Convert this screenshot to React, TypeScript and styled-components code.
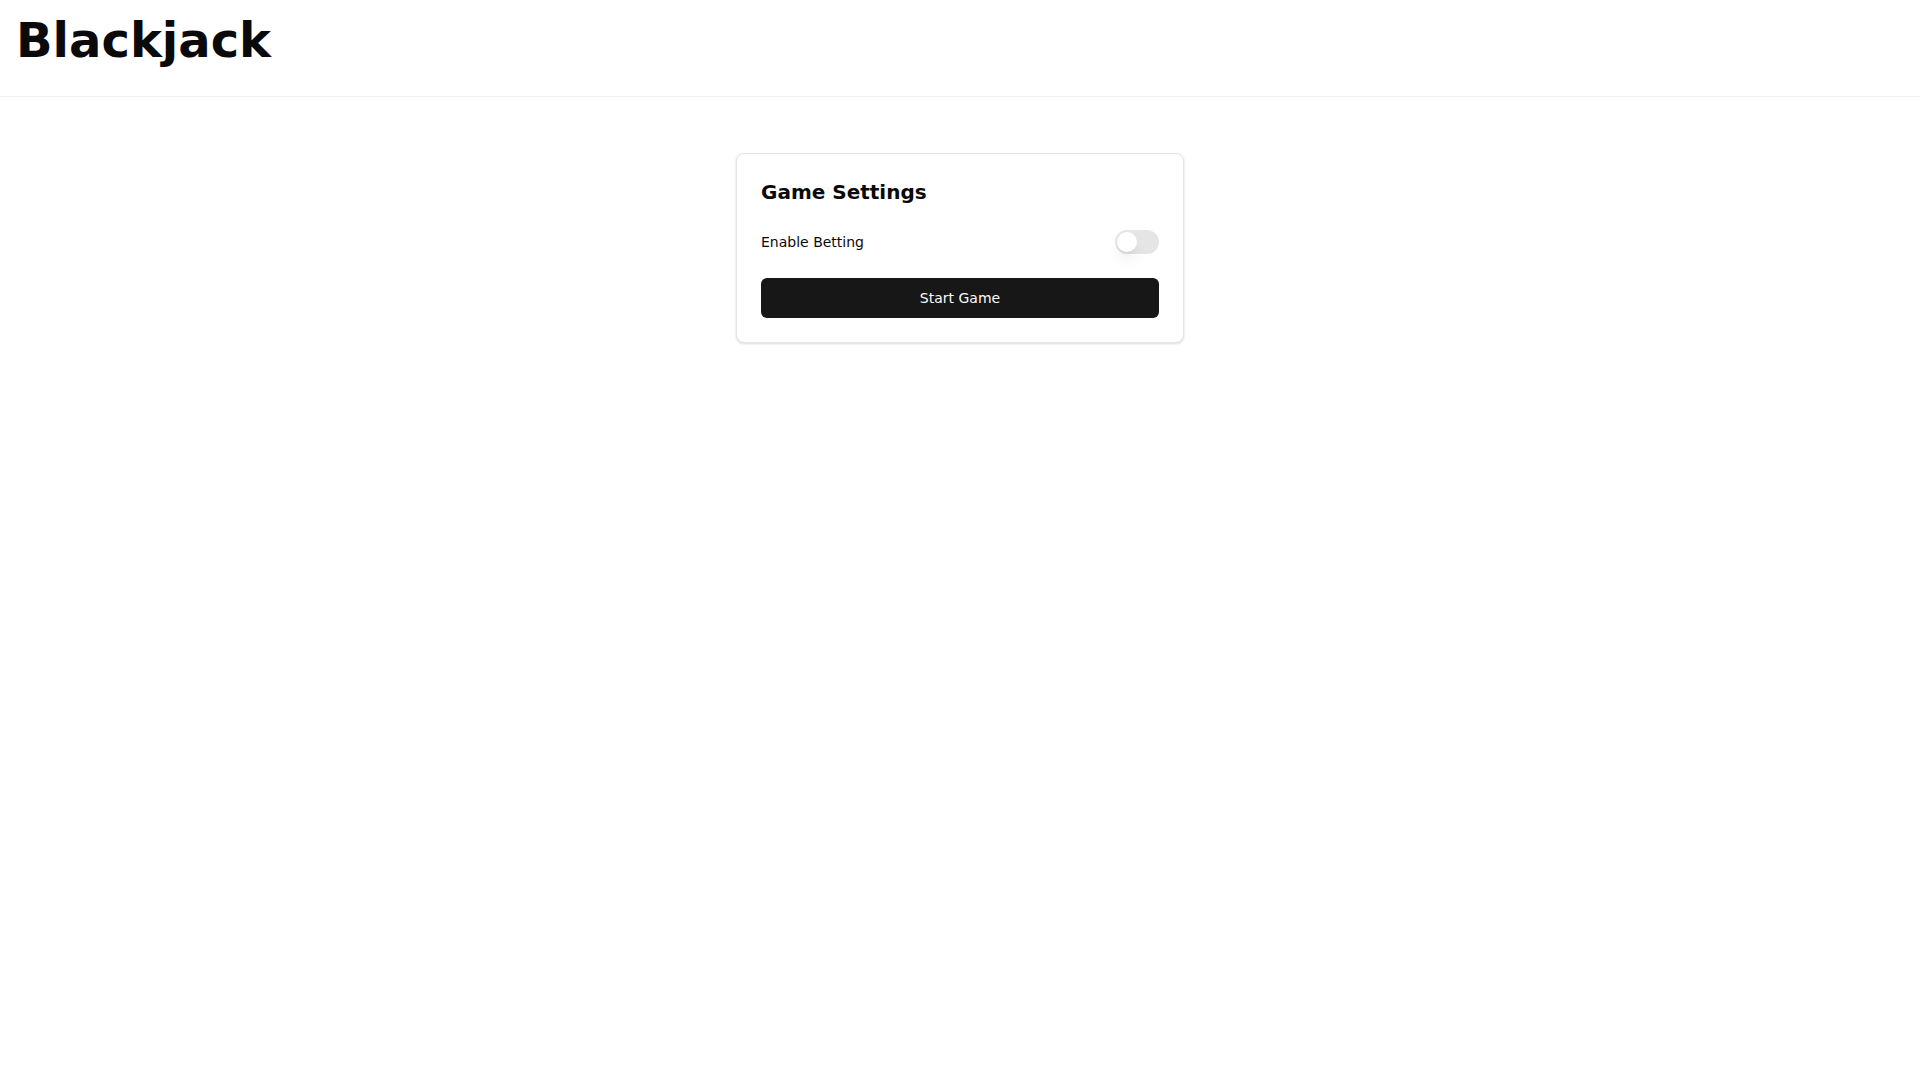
import { useState } from 'react'
import styled, { createGlobalStyle, ThemeProvider } from 'styled-components'

const theme = {
  background: '#ffffff',
  foreground: '#0a0a0a',
  primary: '#171717',
  primaryForeground: '#fafafa',
  border: '#e5e5e5',
  divider: '#f1f1f1',
}

const GlobalStyle = createGlobalStyle`
  *, *::before, *::after {
    box-sizing: border-box;
  }
  body {
    margin: 0;
    background: ${theme.background};
    color: ${theme.foreground};
    font-family: 'DejaVu Sans', sans-serif;
    font-size: 16px;
    line-height: 24px;
  }
`

const Header = styled.header`
  padding: 16px 16px 32px;
  border-bottom: 1px solid ${({ theme }) => theme.divider};
`

const PageTitle = styled.h1`
  margin: 0;
  font-size: 48px;
  font-weight: 700;
  line-height: 48px;
`

const Main = styled.main`
  display: flex;
  justify-content: center;
  padding: 56px 16px;
`

const Card = styled.form`
  display: flex;
  flex-direction: column;
  gap: 24px;
  width: 100%;
  max-width: 448px;
  padding: 24px;
  border: 1px solid ${({ theme }) => theme.border};
  border-radius: 8px;
  background: ${({ theme }) => theme.background};
  box-shadow: 0 1px 2px rgba(0, 0, 0, 0.05), 0 1px 3px rgba(0, 0, 0, 0.1);
`

const CardTitle = styled.h2`
  margin: 0;
  font-size: 20px;
  font-weight: 600;
  line-height: 28px;
`

const Row = styled.div`
  display: flex;
  align-items: center;
  justify-content: space-between;
`

const Label = styled.label`
  font-size: 14px;
  font-weight: 500;
  line-height: 14px;
`

const Switch = styled.input`
  display: flex;
  appearance: none;
  width: 44px;
  height: 24px;
  margin: 0;
  padding: 2px;
  border-radius: 12px;
  background: ${({ theme, checked }) => (checked ? theme.primary : theme.border)};
  cursor: pointer;
  transition: background 0.15s;

  &::before {
    content: '';
    width: 20px;
    height: 20px;
    border-radius: 50%;
    background: ${({ theme }) => theme.background};
    box-shadow: 0 10px 15px -3px rgba(0, 0, 0, 0.1), 0 4px 6px -4px rgba(0, 0, 0, 0.1);
    transform: translateX(${({ checked }) => (checked ? '20px' : 0)});
    transition: transform 0.15s;
  }
`

const Button = styled.button`
  height: 40px;
  padding: 8px 16px;
  border: 0;
  border-radius: 6px;
  background: ${({ theme }) => theme.primary};
  color: ${({ theme }) => theme.primaryForeground};
  font-family: inherit;
  font-size: 14px;
  font-weight: 500;
  line-height: 20px;
  cursor: pointer;
`

const GameSettings = () => {
  const [betting, setBetting] = useState(false)

  return (
    <Card onSubmit={(e) => e.preventDefault()}>
      <CardTitle>Game Settings</CardTitle>
      <Row>
        <Label htmlFor="betting">Enable Betting</Label>
        <Switch
          id="betting"
          type="checkbox"
          role="switch"
          checked={betting}
          onChange={(e) => setBetting(e.target.checked)}
        />
      </Row>
      <Button type="submit">Start Game</Button>
    </Card>
  )
}

export default function App() {
  return (
    <ThemeProvider theme={theme}>
      <GlobalStyle />
      <Header>
        <PageTitle>Blackjack</PageTitle>
      </Header>
      <Main>
        <GameSettings />
      </Main>
    </ThemeProvider>
  )
}
